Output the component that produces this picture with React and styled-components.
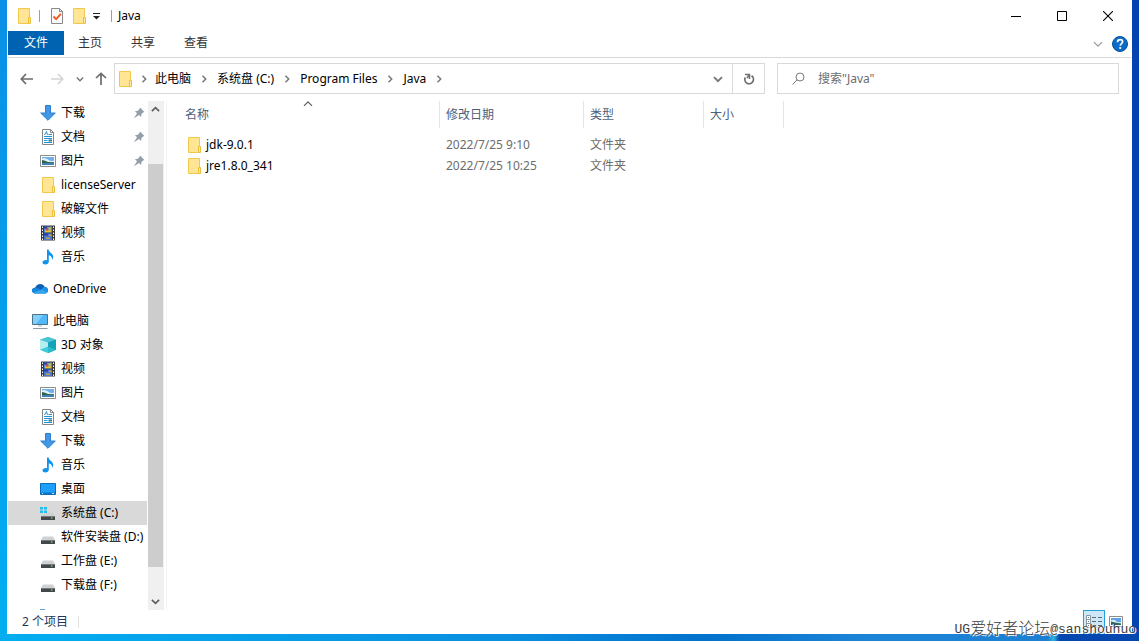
import { useState } from "react";
import styled, { createGlobalStyle } from "styled-components";

const COLORS = {
  ACCENT: "#0063b1",
  LINE: "#d9d9d9",
  TEXT: "#000000",
  MUTED: "#6d6d6d",
  HEADING: "#4c607a",
  STATUS: "#1e395b",
  ICON: "#5f5f5f",
};

const GlobalStyle = createGlobalStyle`
  * {
    box-sizing: border-box;
  }
  body {
    margin: 0;
    overflow: hidden;
  }
  body, button, input {
    font-family: "Noto Sans", "Noto Sans CJK SC", sans-serif;
    font-size: 12px;
    line-height: 16px;
    color: ${COLORS.TEXT};
  }
  button {
    margin: 0;
    padding: 0;
    border: 0;
    background: none;
  }
`;

const Desktop = styled.div`
  position: relative;
  height: 100vh;
  padding: 0 7px 7px;
  background: linear-gradient(
        90deg,
        #04aef0 0%,
        #0a8ee0 45%,
        #0272cc 62%,
        #1c84d6 76%,
        #1c7fd2 92%,
        #2cb4e0 92.5%,
        #0447ae 93%
      )
      bottom / 100% 7px no-repeat,
    linear-gradient(#0444ae, #0444ae) right / 7px 100% no-repeat,
    linear-gradient(#0a90e6, #00aef0);
`;

const Window = styled.div`
  display: flex;
  flex-direction: column;
  height: 100%;
  padding: 0 1px;
  background: #fff;
`;

const TitleBar = styled.header`
  display: flex;
  align-items: center;
  height: 31px;
  padding-left: 8px;
`;

const QuickAccess = styled.div`
  display: flex;
  align-items: center;
  flex: 1;
`;

const QuickButton = styled.button`
  display: flex;
  align-items: center;
  justify-content: center;
  width: ${({ $narrow }) => ($narrow ? 14 : 22)}px;
  height: 22px;
`;

const Divider = styled.span`
  width: 1px;
  height: 12px;
  margin: 0 6px 0 ${({ $gap }) => $gap || 7}px;
  background: ${({ $light }) => ($light ? "#e3e3e3" : "#a0a0a0")};
`;

const Title = styled.h1`
  margin: 0;
  font-size: 12px;
  font-weight: 400;
`;

const CaptionButton = styled.button`
  display: flex;
  align-items: center;
  justify-content: center;
  width: 46px;
  height: 30px;
`;

const Ribbon = styled.nav`
  display: flex;
  height: 27px;
  border-bottom: 1px solid ${COLORS.LINE};
`;

const RibbonTab = styled.button`
  width: ${({ $primary }) => ($primary ? 56 : 52)}px;
  height: 24px;
  margin-right: ${({ $primary }) => ($primary ? 0 : 1)}px;
  background: ${({ $primary }) => ($primary ? COLORS.ACCENT : "none")};
  color: ${({ $primary }) => ($primary ? "#fff" : "#333")};
`;

const RibbonTools = styled.div`
  display: flex;
  align-items: center;
  gap: 9px;
  margin-left: auto;
  padding-right: 3px;
`;

const IconButton = styled.button`
  display: flex;
`;

const AddressRow = styled.div`
  display: grid;
  grid-template-columns: 109px 651fr 12px 342fr;
  padding: 5px 12px 7px 9px;
  grid-template-columns: 97px 651fr 354fr;
`;

const NavButtons = styled.div`
  display: flex;
  align-items: center;
`;

const NavButton = styled.button`
  display: flex;
  justify-content: center;
  width: ${({ $width }) => $width || 20}px;
  margin-right: ${({ $after }) => $after || 0}px;
`;

const AddressBox = styled.div`
  display: flex;
  height: 31px;
  border: 1px solid ${COLORS.LINE};
`;

const Crumbs = styled.ol`
  display: flex;
  align-items: center;
  flex: 1;
  margin: 0;
  padding: 0 0 0 2px;
  list-style: none;
`;

const Crumb = styled.li`
  display: flex;
  align-items: center;
`;

const CrumbButton = styled.button`
  white-space: nowrap;
`;

const CrumbArrow = styled.span`
  display: flex;
  justify-content: center;
  width: ${({ $first }) => ($first ? 22 : 26)}px;
`;

const BoxButton = styled.button`
  display: flex;
  align-items: center;
  justify-content: center;
  width: ${({ $bordered }) => ($bordered ? 32 : 28)}px;
  border-left: ${({ $bordered }) =>
    $bordered ? `1px solid ${COLORS.LINE}` : "0"};
`;

const SearchBox = styled.label`
  display: flex;
  align-items: center;
  gap: 12px;
  height: 31px;
  margin-left: 12px;
  padding: 0 12px;
  border: 1px solid ${COLORS.LINE};
`;

const SearchInput = styled.input`
  flex: 1;
  min-width: 0;
  padding: 0;
  border: 0;
  outline: 0;
  background: none;
  &::placeholder {
    color: ${COLORS.MUTED};
    opacity: 1;
  }
`;

const Body = styled.div`
  display: flex;
  flex: 1;
  min-height: 0;
`;

const Sidebar = styled.nav`
  width: 140px;
  padding-right: 1px;
  overflow: hidden;
`;

const TreeGroup = styled.div`
  margin-bottom: 8px;
`;

const TreeItem = styled.button`
  display: flex;
  align-items: center;
  gap: 5px;
  width: 100%;
  height: 24px;
  padding-left: ${({ $root }) => ($root ? 24 : 32)}px;
  padding-right: 2px;
  background: ${({ $selected }) => ($selected ? "#d9d9d9" : "none")};
  text-align: left;
  white-space: nowrap;
  svg {
    flex: none;
  }
`;

const TreeLabel = styled.span`
  flex: 1;
`;

const ScrollBar = styled.div`
  display: flex;
  flex-direction: column;
  width: 16px;
  background: #f0f0f0;
`;

const ScrollButton = styled.button`
  display: flex;
  align-items: center;
  justify-content: center;
  width: 15px;
  height: 17px;
`;

const ScrollSpace = styled.div`
  flex: ${({ $share }) => $share} 0 0;
`;

const ScrollThumb = styled(ScrollSpace)`
  width: 15px;
  background: #cdcdcd;
`;

const FileArea = styled.main`
  flex: 1;
  margin-left: 2px;
  border-left: 1px solid #f4f4f4;
`;

const FileTable = styled.table`
  width: 617px;
  table-layout: fixed;
  border-collapse: separate;
  border-spacing: 0;
  tbody::before {
    content: "";
    display: block;
    height: 6px;
  }
`;

const HeaderCell = styled.th`
  position: relative;
  width: ${({ $width }) => $width}px;
  height: 27px;
  padding: 0 0 0 ${({ $first }) => ($first ? 18 : 6)}px;
  border-right: 1px solid #e5e5e5;
  color: ${COLORS.HEADING};
  font-weight: 400;
  text-align: left;
`;

const SortMark = styled.span`
  position: absolute;
  top: -2px;
  left: 50%;
  display: flex;
`;

const Cell = styled.td`
  height: 21px;
  padding: 0 0 0 6px;
  color: ${COLORS.MUTED};
`;

const NameCell = styled(Cell)`
  padding-left: 19px;
  color: ${COLORS.TEXT};
`;

const FileName = styled.span`
  display: flex;
  align-items: center;
  gap: 4px;
`;

const StatusBar = styled.footer`
  display: flex;
  align-items: center;
  height: 24px;
  padding: 0 4px 0 14px;
  color: ${COLORS.STATUS};
`;

const ViewButtons = styled.div`
  display: flex;
  margin-left: auto;
`;

const ViewButton = styled.button`
  display: flex;
  align-items: center;
  justify-content: center;
  width: 22px;
  height: 24px;
  border: 1px solid ${({ $active }) => ($active ? "#26a0da" : "transparent")};
  background: ${({ $active }) => ($active ? "#cce8f6" : "none")};
`;

const Watermark = styled.div`
  position: absolute;
  right: 3px;
  bottom: 1px;
  display: flex;
  align-items: center;
  height: 20px;
  color: #3c3c3c;
  font-family: "Liberation Mono", "Noto Sans CJK SC", monospace;
  font-size: 13px;
  text-shadow: 1px 1px 0 #fff, -1px 0 0 #fff;
  white-space: nowrap;
`;

const WatermarkCjk = styled.span`
  font-size: 16px;
  font-weight: 300;
`;

const Icon = ({ children, w = 16, h = 16 }) => (
  <svg width={w} height={h} viewBox={`0 0 ${w} ${h}`} fill="none" aria-hidden>
    {children}
  </svg>
);

const FolderIcon = () => (
  <Icon>
    <path d="M2.5.5h11v15h-11z" fill="#ffe594" stroke="#f0c84b" />
    <path d="M12.5 9.500h2v6h-2z" fill="#ffe9a6" stroke="#ecc03c" />
  </Icon>
);

const CheckDocIcon = () => (
  <Icon>
    <path d="M2.5.5h8l3 3v12h-11z" fill="#fafafa" stroke="#8a8a8a" />
    <path d="M10.5.5v3h3" stroke="#8a8a8a" />
    <path d="M4.5 8.5l2.6 2.6 4.8-5.2" stroke="#f05a1e" strokeWidth="1.8" />
  </Icon>
);

const DownloadIcon = () => (
  <Icon>
    <path
      d="M5.5.5h5v7.5h4.8L8 15.3.7 8h4.8z"
      fill="#3f97e6"
      stroke="#2f7fcc"
    />
  </Icon>
);

const DocumentIcon = () => (
  <Icon>
    <path d="M2.5.5h8l3 3v12h-11z" fill="#fff" stroke="#858585" />
    <path d="M10.5.5v3h3" stroke="#858585" />
    <path
      d="M4 7.5h8M4 9.5h8M4 11.5h3.500M4 13.500h8"
      stroke="#2492d8"
    />
    <path d="M4.500 6L6.500 2.500 7.500 6M8.500 5.500h3.500" stroke="#2d8fd5" />
    <path d="M8.500 10.500h3.500v2h-3.500z" fill="#2c7f92" />
  </Icon>
);

const PictureIcon = () => (
  <Icon>
    <path d="M.5 2.500h15v11h-15z" fill="#fff" stroke="#8d8d8d" />
    <path d="M2 4h12v8h-12z" fill="#6fb0ea" />
    <path d="M2 5.500q3-1.500 6 1t6 1v2.500h-12z" fill="#dceffa" />
    <path d="M2 7l3 .8 3 1.200 6 .2v1.300h-12z" fill="#2b5f50" />
    <path d="M2 10.500h12v1.500h-12z" fill="#3d7fb5" />
  </Icon>
);

const VideoIcon = () => (
  <Icon>
    <path d="M1 .5h14v15h-14z" fill="#3a3a3a" />
    <path d="M4 1.500h8v6h-8z" fill="#5a86dc" />
    <path d="M4 8.500h8v6.500h-8z" fill="#4878d8" />
    <path d="M4 1.500h3v2h-3zM4 8.500h4v2h-4z" fill="#28409a" />
    <path d="M5 5.200h6v2h-6zM8.500 2.500h2.500v2h-2.500z" fill="#e8c52e" />
    <path d="M6 12.500h4v1.500h-4zM9 9.500h2.500v1.500h-2.500z" fill="#d79b35" />
    <path d="M6 3.500h2v2h-2z" fill="#cf4d3f" />
    <path
      d="M2.500 1.500v14M13.500 1.500v14"
      stroke="#fff"
      strokeDasharray="1.500 1.500"
    />
  </Icon>
);

const MusicIcon = () => (
  <Icon>
    <path
      d="M7 .5h1.600c.2 3 4.600 3.900 4.600 7.300 0 1.300-.5 2.300-1.200 3.100.3-2.600-1-3.900-3.200-4.600v6.300c0 1.800-1.500 2.900-3.400 2.900-1.700 0-2.900-.8-2.900-2 0-1.500 1.600-2.500 3.300-2.500.5 0 .9.1 1.200.2z"
      fill="#0f94ee"
    />
  </Icon>
);

const OneDriveIcon = () => (
  <Icon>
    <path
      d="M3.500 12.500C1.300 12.500 0 11.200 0 9.600 0 7.900 1.400 6.700 3.100 6.700 4 4.400 6 3 8.200 3c2 0 3.800 1.200 4.500 3.100C14.700 6.200 16 7.600 16 9.400c0 1.800-1.400 3.100-3.200 3.100z"
      fill="#0f5fb8"
    />
    <path
      d="M3.100 6.700c1.300-.3 2.500 0 3.500.7l3.500 2.100-6.600 3C1.300 12.500 0 11.200 0 9.600 0 7.900 1.400 6.700 3.100 6.700z"
      fill="#1684dc"
    />
    <path
      d="M12.700 6.100C14.700 6.200 16 7.600 16 9.400L14.500 12l-5-2.800c.4-1.900 1.700-3.100 3.200-3.100z"
      fill="#1a90e6"
    />
    <path
      d="M1.200 11.600L9.700 8.500l5.700 2.700c-.6.800-1.500 1.300-2.600 1.300H3.500c-.9 0-1.700-.3-2.300-.9z"
      fill="#32a5f0"
    />
  </Icon>
);

const ComputerIcon = () => (
  <Icon>
    <path d="M.5 1.500h15v10h-15z" fill="#52b8f8" stroke="#4d7389" />
    <path d="M1 2h10L4 11H1z" fill="#83cffc" />
    <path d="M6 13h4" stroke="#a9b8c0" />
    <path d="M1 15.500h14.500" stroke="#8e9ca5" />
  </Icon>
);

const CubeIcon = () => (
  <Icon>
    <path d="M8 0l8 2.800v10L8 16 0 12.800v-10z" fill="#1fb5c8" />
    <path d="M0 2.800L8 0l8 2.800L8 5.600z" fill="#4cc5d2" />
    <path d="M0 2.800l8 2.800V16L0 12.800z" fill="#b4eef1" />
    <path d="M0 12.800l8-3.300V16z" fill="#3fcbd8" />
    <path d="M8 5.600l8-2.800v10L8 16z" fill="#14a3b8" />
    <path d="M8 9.500l8 3.300L8 16z" fill="#2bbccb" />
  </Icon>
);

const DesktopIcon = () => (
  <Icon>
    <path d="M.5 2.500h15v11h-15z" fill="#1ba1fb" stroke="#0b6cb8" />
    <path d="M1 11.500h14v1.500h-14z" fill="#0f74c4" />
    <path d="M2 12.500h1M12 12.500h2" stroke="#c7e6ff" />
  </Icon>
);

const DriveIcon = ({ system }) => (
  <Icon>
    <path d="M3 7.500h10l2 3.500H1z" fill="#cfd1d3" />
    <path d="M1 11h14v4H1z" fill="#44474a" />
    <path d="M1 11.500h14" stroke="#77797c" />
    <path d="M11 13h1.500" stroke="#42e04f" strokeWidth="1.500" />
    {system && (
      <>
        <path d="M0 1h7v8H0z" fill="#d9d9d9" />
        <path
          d="M0 2h3v2.500H0zM4 2h3v2.500H4zM0 5.500h3V8H0zM4 5.500h3V8H4z"
          fill="#1fbdf2"
        />
      </>
    )}
  </Icon>
);

const NetworkIcon = () => (
  <Icon>
    <path d="M8 0h5v1.500H8z" fill="#5aa3dc" />
    <path d="M3 1.500h12v9H3z" fill="#3d9be0" />
  </Icon>
);

const PinIcon = () => (
  <Icon w={12} h={12}>
    <path
      d="M7 .5L11.500 5l-1.500.6-1.800 2 .1 2.400L5.800 8 .8 11.500 4 6.300 1.900 4l2.600-.1L6.500 2z"
      fill="#929fab"
    />
  </Icon>
);

const Chevron = ({ dir = "right", color = COLORS.ICON, size = 8, bold }) => {
  const turn = { right: 0, down: 90, left: 180, up: 270 }[dir];
  return (
    <svg width={size} height={size} viewBox="0 0 8 8" fill="none" aria-hidden>
      <path
        d="M2.500 .8L5.700 4 2.500 7.200"
        stroke={color}
        strokeWidth={bold ? 1.5 : 1}
        transform={`rotate(${turn} 4 4)`}
      />
    </svg>
  );
};

const ArrowIcon = ({ turn = 0, color = "#6b6b6b" }) => (
  <Icon>
    <path
      d="M14 8H2.500M7 3L2.300 8 7 13"
      stroke={color}
      strokeWidth="1.700"
      transform={`rotate(${turn} 8 8)`}
    />
  </Icon>
);

const RefreshIcon = () => (
  <Icon>
    <path
      d="M4.300 6.500A4.300 4.300 0 1 0 10.500 4.800"
      stroke="#707070"
      strokeWidth="1.800"
    />
    <path d="M4 3.500h4.500v4.500M8.500 3.500L6 7" stroke="#707070" strokeWidth="1.500" />
  </Icon>
);

const SearchIcon = () => (
  <Icon>
    <circle cx="10" cy="6" r="4" stroke="#7b7b7b" />
    <path d="M7.100 8.900L2.500 13.500" stroke="#7b7b7b" />
  </Icon>
);

const HelpIcon = () => (
  <Icon>
    <circle cx="8" cy="8" r="7.500" fill="#0a6cc9" stroke="#0c4f93" />
    <path
      d="M5.500 6.200c0-1.700 1.100-2.600 2.600-2.600s2.500.9 2.500 2.200c0 1.800-2.300 1.800-2.300 3.900"
      stroke="#fff"
      strokeWidth="1.700"
    />
    <circle cx="8.200" cy="12" r="1.100" fill="#fff" />
  </Icon>
);

const DetailsIcon = () => (
  <Icon>
    <path
      d="M.5 1.500h4v12h-4zM.5 5.500h4M.5 9.500h4"
      fill="#fff"
      stroke="#8b969d"
    />
    <path d="M2 3.500h1M2 7.500h1M2 11.500h1" stroke="#447f9e" />
    <path
      d="M6 3.500h4M12 3.500h4M6 7.500h4M12 7.500h4M6 11.500h4M12 11.500h4"
      stroke="#5f6a70"
    />
  </Icon>
);

const LargeIconsIcon = () => (
  <Icon w={14} h={12}>
    <path d="M.5.500h13v10h-13z" fill="#fff" stroke="#8d8d8d" />
    <path d="M2 2h10v7h-10z" fill="#5f9fe6" />
    <path d="M2 4.500q3-1.500 5 .5t5 1v2h-10z" fill="#d6ebf8" />
    <path d="M2 5.500l4 1 6 1v1.500h-10z" fill="#2b6a5a" />
  </Icon>
);

const CRUMBS = ["此电脑", "系统盘 (C:)", "Program Files", "Java"];

const TREE = [
  {
    items: [
      { label: "下载", icon: <DownloadIcon />, pinned: true },
      { label: "文档", icon: <DocumentIcon />, pinned: true },
      { label: "图片", icon: <PictureIcon />, pinned: true },
      { label: "licenseServer", icon: <FolderIcon /> },
      { label: "破解文件", icon: <FolderIcon /> },
      { label: "视频", icon: <VideoIcon /> },
      { label: "音乐", icon: <MusicIcon /> },
    ],
  },
  { items: [{ label: "OneDrive", icon: <OneDriveIcon />, root: true }] },
  {
    items: [
      { label: "此电脑", icon: <ComputerIcon />, root: true },
      { label: "3D 对象", icon: <CubeIcon /> },
      { label: "视频", icon: <VideoIcon /> },
      { label: "图片", icon: <PictureIcon /> },
      { label: "文档", icon: <DocumentIcon /> },
      { label: "下载", icon: <DownloadIcon /> },
      { label: "音乐", icon: <MusicIcon /> },
      { label: "桌面", icon: <DesktopIcon /> },
      { label: "系统盘 (C:)", icon: <DriveIcon system /> },
      { label: "软件安装盘 (D:)", icon: <DriveIcon /> },
      { label: "工作盘 (E:)", icon: <DriveIcon /> },
      { label: "下载盘 (F:)", icon: <DriveIcon /> },
    ],
  },
];

const FILES = [
  { name: "jdk-9.0.1", date: "2022/7/25 9:10", type: "文件夹" },
  { name: "jre1.8.0_341", date: "2022/7/25 10:25", type: "文件夹" },
];

const App = () => {
  const [selected, setSelected] = useState("系统盘 (C:)");
  const [query, setQuery] = useState("");

  return (
    <Desktop>
      <GlobalStyle />
      <Window>
        <TitleBar>
          <QuickAccess>
            <FolderIcon />
            <Divider />
            <QuickButton aria-label="属性">
              <CheckDocIcon />
            </QuickButton>
            <QuickButton aria-label="新建文件夹">
              <FolderIcon />
            </QuickButton>
            <QuickButton $narrow aria-label="自定义快速访问工具栏">
              <Icon w={8} h={8}>
                <path d="M0 1.500h7" stroke="#222" />
                <path d="M0 4h7L3.500 7.500z" fill="#222" />
              </Icon>
            </QuickButton>
            <Divider />
            <Title>Java</Title>
          </QuickAccess>
          <CaptionButton aria-label="最小化">
            <Icon w={10} h={10}>
              <path d="M0 5.500h10" stroke="#000" />
            </Icon>
          </CaptionButton>
          <CaptionButton aria-label="最大化">
            <Icon w={10} h={10}>
              <path d="M.5.5h9v9h-9z" stroke="#000" />
            </Icon>
          </CaptionButton>
          <CaptionButton aria-label="关闭">
            <Icon w={10} h={10}>
              <path d="M0 0l10 10M10 0L0 10" stroke="#000" strokeWidth="1.100" />
            </Icon>
          </CaptionButton>
        </TitleBar>

        <Ribbon>
          <RibbonTab $primary>文件</RibbonTab>
          <RibbonTab>主页</RibbonTab>
          <RibbonTab>共享</RibbonTab>
          <RibbonTab>查看</RibbonTab>
          <RibbonTools>
            <IconButton aria-label="展开功能区">
              <Chevron dir="down" size={10} color="#9a9a9a" />
            </IconButton>
            <IconButton aria-label="帮助">
              <HelpIcon />
            </IconButton>
          </RibbonTools>
        </Ribbon>

        <AddressRow>
          <NavButtons>
            <NavButton $after={10} aria-label="后退">
              <ArrowIcon />
            </NavButton>
            <NavButton $after={6} aria-label="前进">
              <ArrowIcon turn={180} color="#d5d5d5" />
            </NavButton>
            <NavButton $width={14} $after={4} aria-label="最近浏览的位置">
              <Chevron dir="down" bold color="#777" />
            </NavButton>
            <NavButton aria-label="上移">
              <ArrowIcon turn={90} />
            </NavButton>
          </NavButtons>
          <AddressBox>
            <Crumbs>
              <Crumb>
                <FolderIcon />
                <CrumbArrow $first>
                  <Chevron bold color="#777" />
                </CrumbArrow>
              </Crumb>
              {CRUMBS.map((crumb) => (
                <Crumb key={crumb}>
                  <CrumbButton>{crumb}</CrumbButton>
                  <CrumbArrow>
                    <Chevron bold color="#777" />
                  </CrumbArrow>
                </Crumb>
              ))}
            </Crumbs>
            <BoxButton aria-label="以前的位置">
              <Chevron dir="down" size={10} bold color="#777" />
            </BoxButton>
            <BoxButton $bordered aria-label="刷新">
              <RefreshIcon />
            </BoxButton>
          </AddressBox>
          <SearchBox>
            <SearchIcon />
            <SearchInput
              type="text"
              aria-label="搜索"
              placeholder={'搜索"Java"'}
              value={query}
              onChange={(e) => setQuery(e.target.value)}
            />
          </SearchBox>
        </AddressRow>

        <Body>
          <Sidebar>
            {TREE.map((group, i) => (
              <TreeGroup key={i}>
                {group.items.map(({ label, icon, root, pinned }) => (
                  <TreeItem
                    key={label}
                    $root={root}
                    $selected={label === selected}
                    onClick={() => setSelected(label)}
                  >
                    {icon}
                    <TreeLabel>{label}</TreeLabel>
                    {pinned && <PinIcon />}
                  </TreeItem>
                ))}
              </TreeGroup>
            ))}
            <TreeItem $root aria-label="网络">
              <NetworkIcon />
            </TreeItem>
          </Sidebar>
          <ScrollBar>
            <ScrollButton aria-label="向上滚动">
              <Chevron dir="up" size={9} bold />
            </ScrollButton>
            <ScrollSpace $share={46} />
            <ScrollThumb $share={403} />
            <ScrollSpace $share={26} />
            <ScrollButton aria-label="向下滚动">
              <Chevron dir="down" size={9} bold />
            </ScrollButton>
          </ScrollBar>
          <FileArea>
            <FileTable>
              <thead>
                <tr>
                  <HeaderCell $first $width={273}>
                    名称
                    <SortMark>
                      <Chevron dir="up" size={10} />
                    </SortMark>
                  </HeaderCell>
                  <HeaderCell $width={144}>修改日期</HeaderCell>
                  <HeaderCell $width={120}>类型</HeaderCell>
                  <HeaderCell $width={80}>大小</HeaderCell>
                </tr>
              </thead>
              <tbody>
                {FILES.map(({ name, date, type }) => (
                  <tr key={name}>
                    <NameCell>
                      <FileName>
                        <FolderIcon />
                        {name}
                      </FileName>
                    </NameCell>
                    <Cell>{date}</Cell>
                    <Cell>{type}</Cell>
                    <Cell />
                  </tr>
                ))}
              </tbody>
            </FileTable>
          </FileArea>
        </Body>

        <StatusBar>
          <span>2 个项目</span>
          <Divider $light $gap={10} />
          <ViewButtons>
            <ViewButton $active aria-label="详细信息">
              <DetailsIcon />
            </ViewButton>
            <ViewButton aria-label="大图标">
              <LargeIconsIcon />
            </ViewButton>
          </ViewButtons>
        </StatusBar>
      </Window>
      <Watermark>
        UG<WatermarkCjk>爱好者论坛</WatermarkCjk>@sanshouhuo
      </Watermark>
    </Desktop>
  );
};

export default App;
